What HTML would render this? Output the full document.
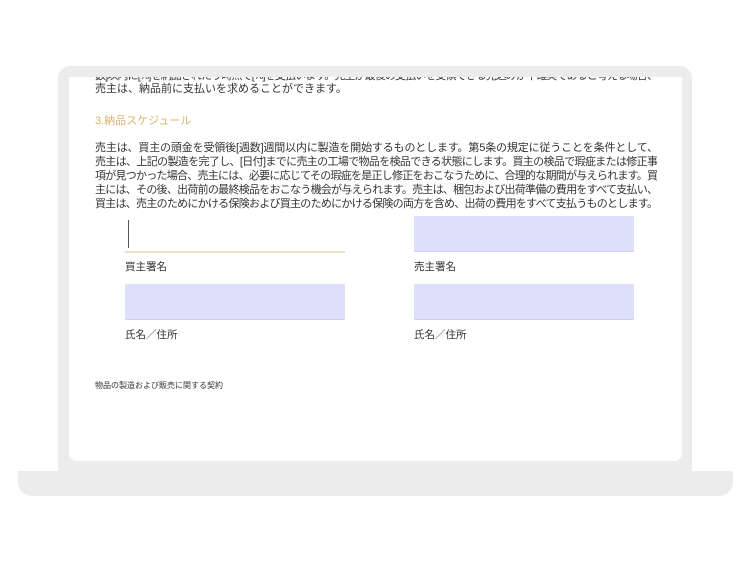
<!DOCTYPE html>
<html><head><meta charset="utf-8"><style>
html,body{margin:0;padding:0;background:#fff;width:750px;height:563px;overflow:hidden;font-family:"Liberation Sans","Noto Sans CJK JP",sans-serif;}
.frame{position:absolute;left:58px;top:66px;width:634px;height:406px;background:#ececec;border-radius:12px 12px 0 0;}
.screen{position:absolute;left:69px;top:77px;width:613px;height:384px;background:#fff;border-radius:0 0 8px 8px;overflow:hidden;}
.base{position:absolute;left:18px;top:471px;width:715px;height:25px;background:#ececec;border-radius:0 0 14px 14px;}
.t{position:absolute;left:26px;font-size:11px;color:#333;white-space:nowrap;line-height:14px;}
.j{width:562px;text-align:justify;text-align-last:justify;letter-spacing:-1px;white-space:normal;overflow:hidden;height:14px;}
.h{color:#d9b56a;}
.f{position:absolute;width:220px;height:35px;background:#dde0fb;border-bottom:1px solid #cfd2e8;}
.lab{position:absolute;font-size:10.5px;color:#333;}
</style></head><body>
<div class="frame"></div>
<div class="base"></div>
<div class="screen">
<div class="t j" style="top:-8px">数]以内に[%]を納品されたり時点で[%]を支払います。売主が最後の支払いを受領できる見込みが不確実であると考える場合、</div>
<div class="t" style="top:5px">売主は、納品前に支払いを求めることができます。</div>
<div class="t h" style="top:37px">3.納品スケジュール</div>
<div class="t j" style="top:64px">売主は、買主の頭金を受領後[週数]週間以内に製造を開始するものとします。第5条の規定に従うことを条件として、</div>
<div class="t j" style="top:78px">売主は、上記の製造を完了し、[日付]までに売主の工場で物品を検品できる状態にします。買主の検品で瑕疵または修正事</div>
<div class="t j" style="top:92px">項が見つかった場合、売主には、必要に応じてその瑕疵を是正し修正をおこなうために、合理的な期間が与えられます。買</div>
<div class="t j" style="top:106px">主には、その後、出荷前の最終検品をおこなう機会が与えられます。売主は、梱包および出荷準備の費用をすべて支払い、</div>
<div class="t j" style="top:120px">買主は、売主のためにかける保険および買主のためにかける保険の両方を含め、出荷の費用をすべて支払うものとします。</div>
<div class="f" style="left:56px;top:139px;background:#fff;border-bottom:2px solid #ece2c4"></div>
<div style="position:absolute;left:59px;top:143px;width:1px;height:28px;background:#555"></div>
<div class="f" style="left:345px;top:139px"></div>
<div class="lab" style="left:56px;top:182px">買主署名</div>
<div class="lab" style="left:345px;top:182px">売主署名</div>
<div class="f" style="left:56px;top:207px"></div>
<div class="f" style="left:345px;top:207px"></div>
<div class="lab" style="left:56px;top:250px">氏名／住所</div>
<div class="lab" style="left:345px;top:250px">氏名／住所</div>
<div class="t" style="top:302px;font-size:8px;">物品の製造および販売に関する契約</div>
</div>
</body></html>
